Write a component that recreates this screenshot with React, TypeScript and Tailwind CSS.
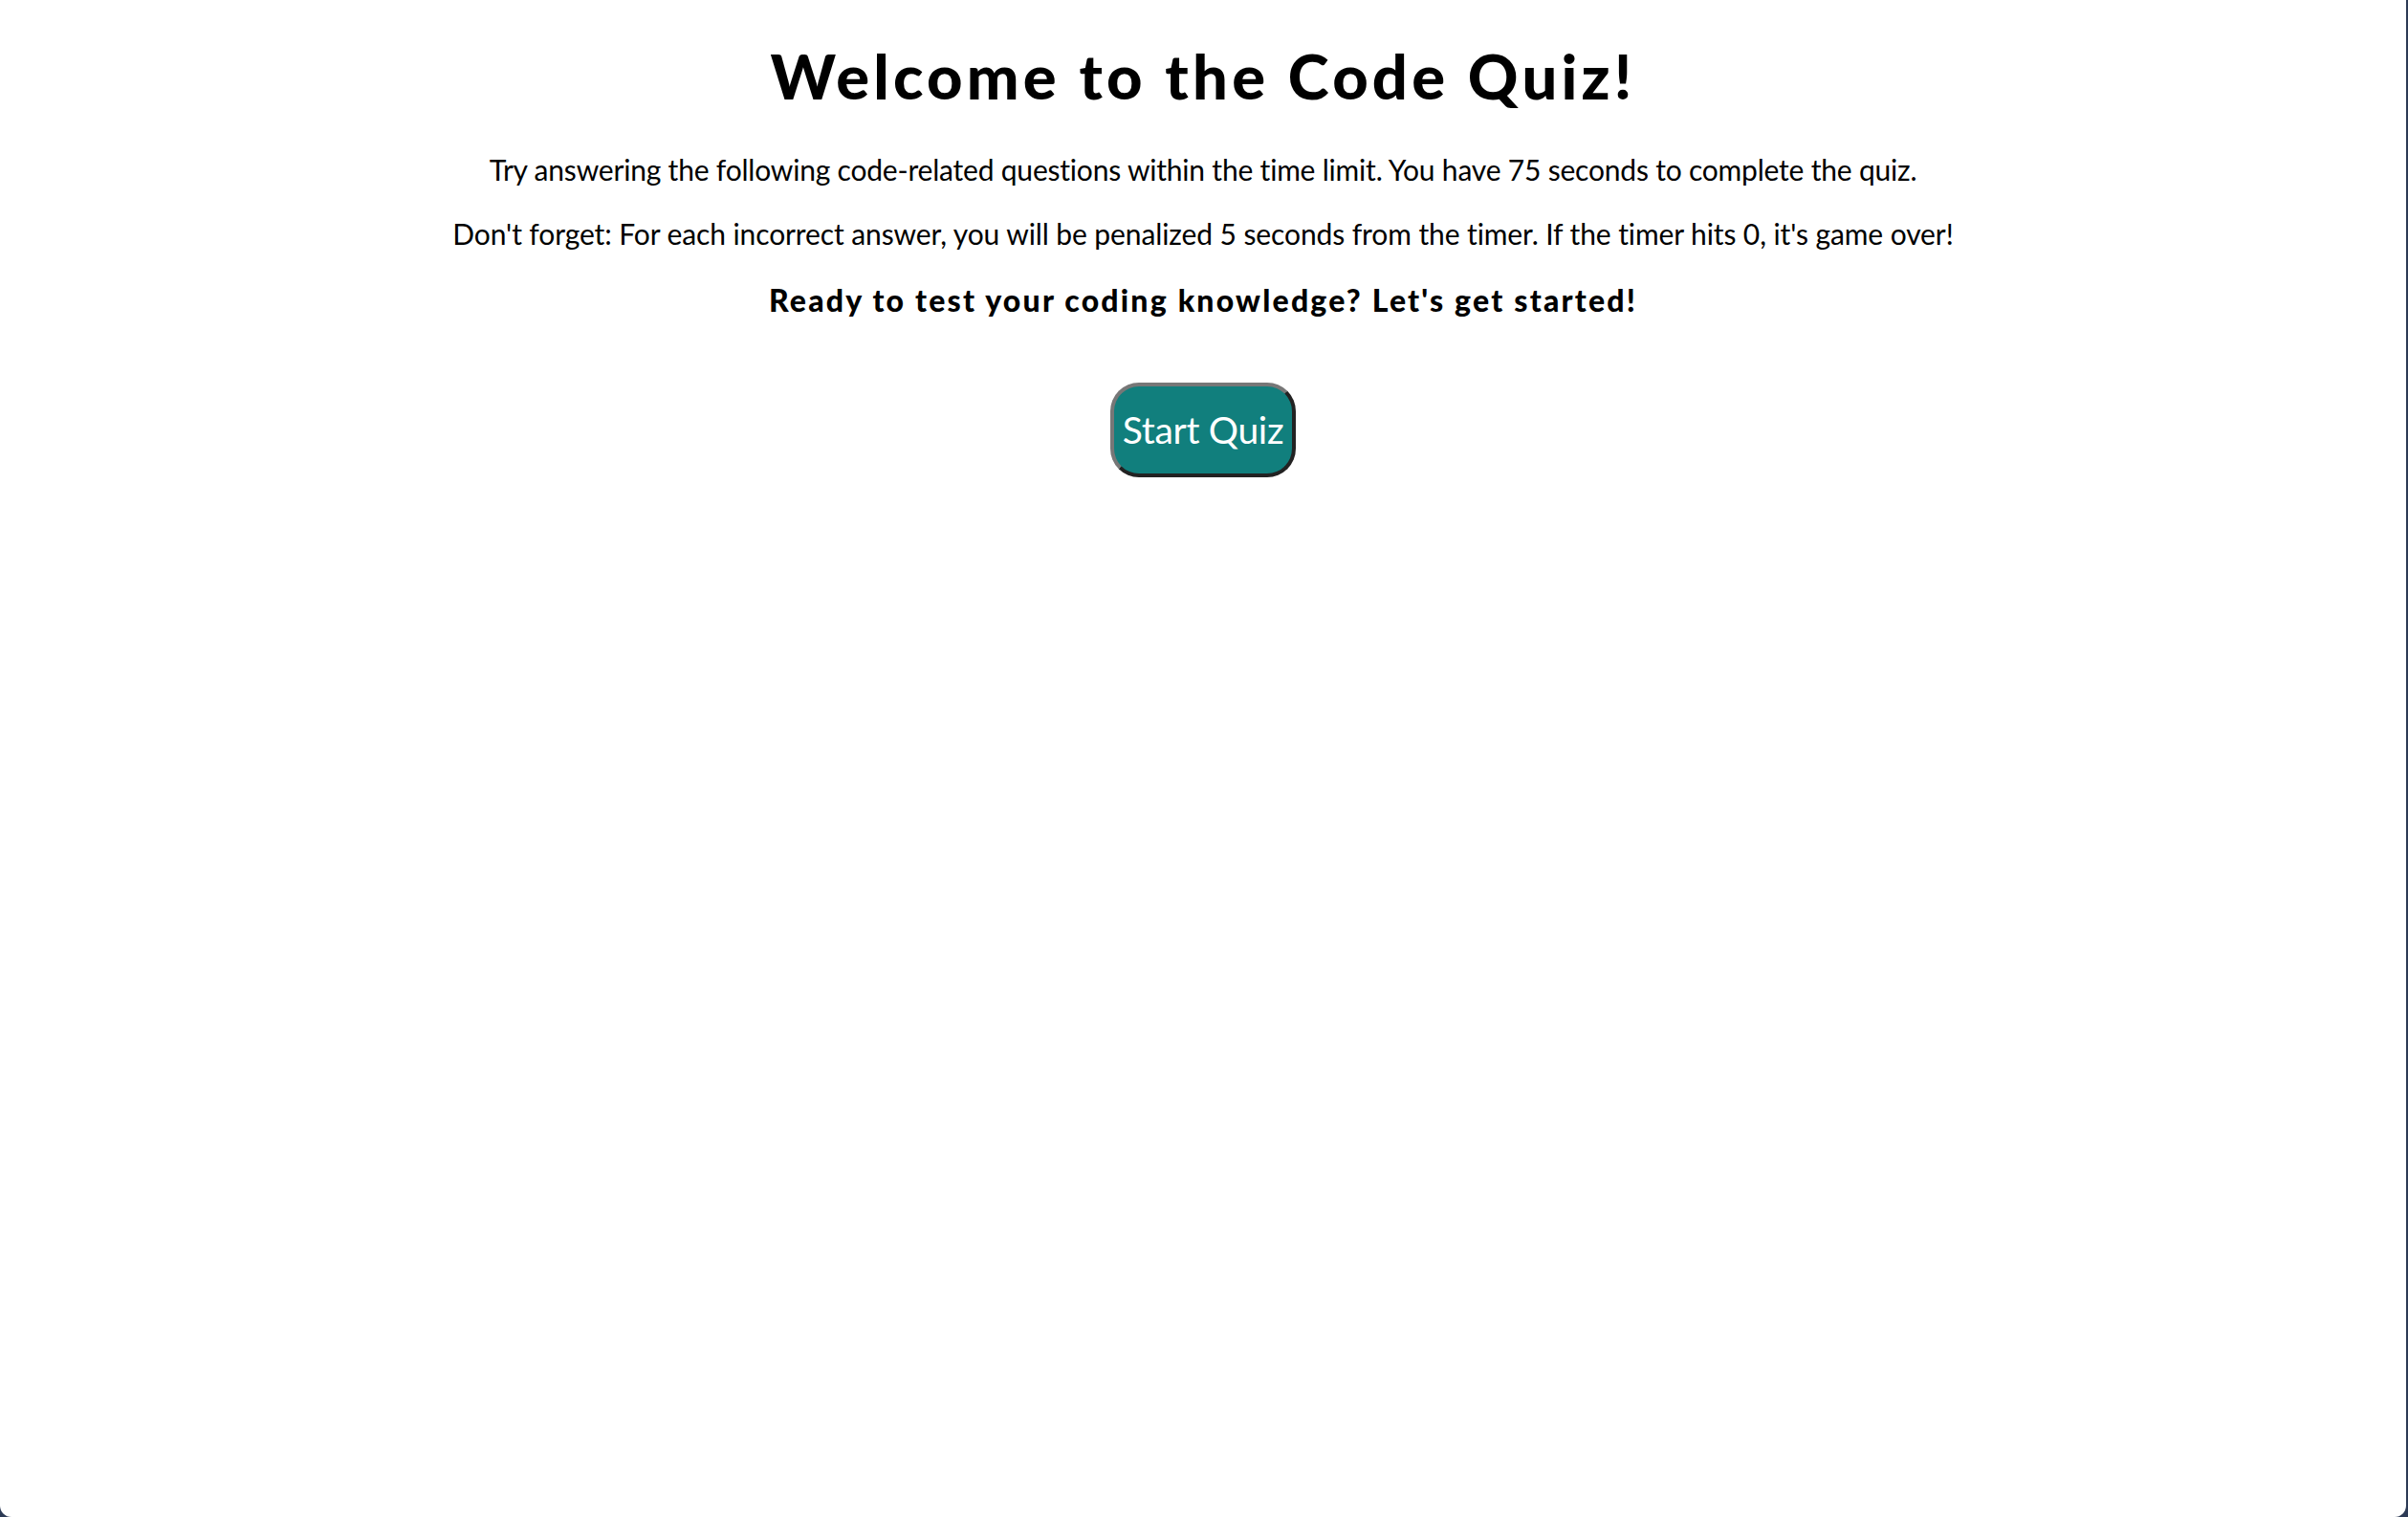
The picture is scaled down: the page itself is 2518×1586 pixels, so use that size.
import React from 'react'

export default function App(){
  return (
    <div className="h-[1586px] w-full bg-[#2c3a55] overflow-hidden">
      <div className="h-full w-[2516px] bg-white rounded-b-[12px] text-center text-black font-['Lato','Liberation_Sans',sans-serif]">
        <h1 className="pt-[42px] text-[65px] leading-[74px] font-black tracking-[4.2px]">Welcome to the Code Quiz!</h1>
        <p className="mt-[43px] text-[30px] leading-[37px] tracking-[-0.2px]">
          Try answering the following code-related questions within the time limit. You have 75 seconds to complete the quiz.
        </p>
        <p className="mt-[30px] text-[30px] leading-[37px] tracking-[-0.1px]">
          Don't forget: For each incorrect answer, you will be penalized 5 seconds from the timer. If the timer hits 0, it's game over!
        </p>
        <p className="mt-[32px] text-[32px] leading-[37px] font-black tracking-[2.2px]">
          Ready to test your coding knowledge? Let's get started!
        </p>
        <button className="mt-[68px] h-[99px] w-[194px] rounded-[30px] bg-[#117f7d] text-white text-[39px] tracking-[-0.3px] border-[4px] border-t-[#777] border-l-[#777] border-b-[#222] border-r-[#222]">
          Start Quiz
        </button>
      </div>
    </div>
  )
}
